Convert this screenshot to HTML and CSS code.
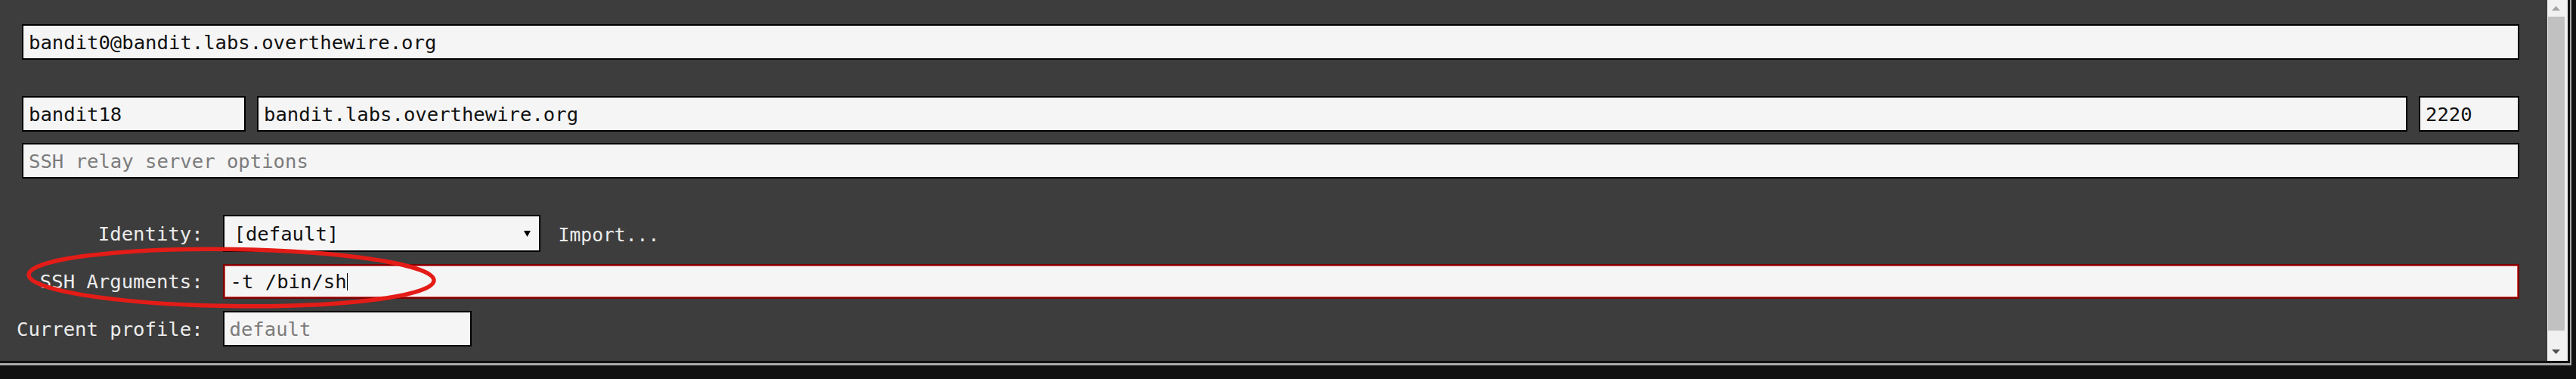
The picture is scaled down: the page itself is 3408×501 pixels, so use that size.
FILE: index.html
```html
<!DOCTYPE html>
<html lang="en">
<head>
<meta charset="utf-8">
<title>SSH profile</title>
<link rel="stylesheet" href="styles.css">
</head>
<body>
<div class="frame">
  <div class="panel">
    <div class="content">
      <div class="conn">
        <input class="field" type="text" value="bandit0@bandit.labs.overthewire.org">
        <div class="host-row">
          <input class="field user" type="text" value="bandit18">
          <input class="field host" type="text" value="bandit.labs.overthewire.org">
          <input class="field port" type="text" value="2220">
        </div>
        <input class="field relay" type="text" placeholder="SSH relay server options">
      </div>
      <div class="opts">
        <label class="lbl">Identity:</label>
        <div class="ident">
          <div class="select-wrap">
            <select class="select"><option>[default]</option></select>
            <svg class="arrow" width="9" height="8" viewBox="0 0 9 8"><path d="M0 0H9L4.5 8Z" fill="#000"/></svg>
          </div>
          <span class="import">Import...</span>
        </div>
        <label class="lbl">SSH Arguments:</label>
        <div class="args-wrap">
          <input class="field args" type="text" value="-t /bin/sh">
          <span class="caret"></span>
        </div>
        <label class="lbl">Current profile:</label>
        <div><input class="field profile" type="text" placeholder="default"></div>
      </div>
      <svg class="mark" width="580" height="100" viewBox="0 0 580 100">
        <ellipse cx="290" cy="48" rx="268" ry="37.5" transform="rotate(0.8 290 48)" fill="none" stroke="#e41c17" stroke-width="5.5"/>
      </svg>
    </div>
    <div class="scrollbar">
      <div class="sb-btn up"><svg width="11" height="6" viewBox="0 0 11 6"><path d="M0 6H11L5.5 0Z" fill="#a3a3a3"/></svg></div>
      <div class="sb-thumb"></div>
      <div class="sb-track"></div>
      <div class="sb-btn down"><svg width="11" height="6" viewBox="0 0 11 6"><path d="M0 0H11L5.5 6Z" fill="#505050"/></svg></div>
    </div>
  </div>
</div>
</body>
</html>
```
FILE: styles.css
```css
html, body {
  margin: 0;
  padding: 0;
  background: #111111;
}
body {
  width: 3408px;
  height: 501px;
  overflow: hidden;
  font-family: "DejaVu Sans Mono", "Liberation Mono", monospace;
}
.frame {
  box-sizing: border-box;
  width: 3402px;
  height: 483px;
  border-right: 2px solid #a9a9a9;
  border-bottom: 3px solid #a9a9a9;
}
.panel {
  box-sizing: border-box;
  height: 100%;
  display: flex;
  background: #3d3d3d;
  border-right: 3px solid #111111;
  border-bottom: 3px solid #111111;
}
.content {
  position: relative;
  flex: 1;
  padding-top: 32px;
}
.field {
  box-sizing: border-box;
  height: 47px;
  margin: 0;
  border: 2px solid #000;
  border-radius: 0;
  background: #f5f5f5;
  color: #111;
  padding: 0 7px;
  font-family: "DejaVu Sans Mono", "Liberation Mono", monospace;
  font-size: 25.6px;
  outline: none;
}
.field::placeholder {
  color: #7c7c7c;
}
.conn {
  display: flex;
  flex-direction: column;
  padding: 0 37px 0 29px;
}
.host-row {
  display: flex;
  gap: 15px;
  margin-top: 48px;
}
.user { width: 296px; }
.host { flex: 1; min-width: 0; }
.port { width: 133px; }
.relay { margin-top: 15px; }
.opts {
  display: grid;
  grid-template-columns: max-content 1fr;
  column-gap: 26px;
  row-gap: 16px;
  align-items: center;
  margin-top: 48px;
  padding: 0 37px 0 22px;
}
.lbl {
  color: #ececec;
  font-size: 25.6px;
  text-align: right;
  white-space: nowrap;
}
.ident {
  display: flex;
  align-items: center;
  gap: 24px;
}
.select-wrap {
  position: relative;
  width: 420px;
  height: 49px;
}
.select {
  -webkit-appearance: none;
  appearance: none;
  box-sizing: border-box;
  width: 100%;
  height: 100%;
  margin: 0;
  border: 2px solid #000;
  border-radius: 0;
  background: #f5f5f5;
  color: #111;
  padding: 0 30px 0 13px;
  font-family: "DejaVu Sans Mono", "Liberation Mono", monospace;
  font-size: 25.6px;
  outline: none;
}
.arrow {
  position: absolute;
  right: 13px;
  top: 21px;
}
.import {
  color: #ececec;
  font-family: "DejaVu Sans Mono", monospace;
  font-size: 24.7px;
  padding-top: 3px;
}
.args-wrap {
  position: relative;
}
.args {
  display: block;
  width: 100%;
  height: 46px;
  border-color: #7d0000;
  box-shadow: inset 0 0 0 1px #d24a4a;
  padding-left: 8px;
}
.caret {
  position: absolute;
  left: 164px;
  top: 12px;
  width: 1px;
  height: 23px;
  background: #000;
}
.profile {
  display: block;
  width: 329px;
}
.mark {
  position: absolute;
  left: 16px;
  top: 319px;
  pointer-events: none;
}
.scrollbar {
  width: 27px;
  display: flex;
  flex-direction: column;
  background: #f1f1f1;
}
.sb-btn {
  display: flex;
  align-items: center;
  justify-content: center;
  padding-right: 4px;
}
.sb-btn.up { height: 22px; }
.sb-btn.down { height: 25px; }
.sb-thumb {
  height: 415px;
  margin: 0 4px 0 1px;
  background: #c1c1c1;
}
.sb-track { flex: 1; }
```
